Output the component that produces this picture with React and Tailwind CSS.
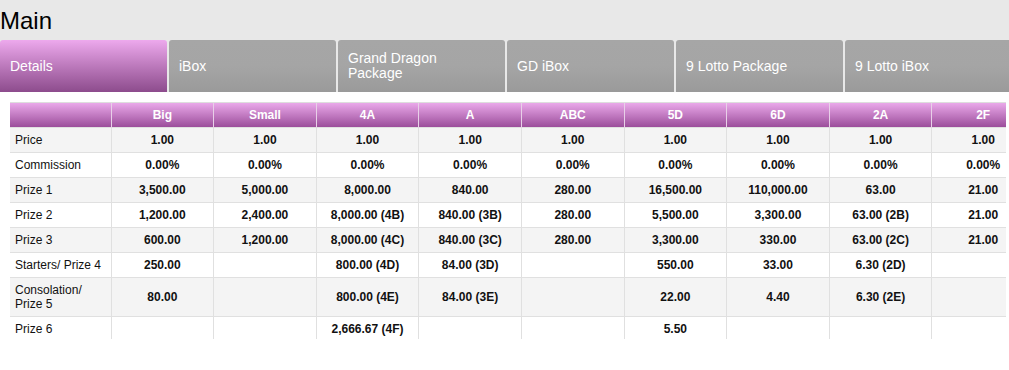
import React from "react";

const tabs = ["Details", "iBox", "Grand Dragon Package", "GD iBox", "9 Lotto Package", "9 Lotto iBox"];
const cols = ["Big", "Small", "4A", "A", "ABC", "5D", "6D", "2A", "2F"];
const rows = [
  ["Price", "1.00", "1.00", "1.00", "1.00", "1.00", "1.00", "1.00", "1.00", "1.00"],
  ["Commission", "0.00%", "0.00%", "0.00%", "0.00%", "0.00%", "0.00%", "0.00%", "0.00%", "0.00%"],
  ["Prize 1", "3,500.00", "5,000.00", "8,000.00", "840.00", "280.00", "16,500.00", "110,000.00", "63.00", "21.00"],
  ["Prize 2", "1,200.00", "2,400.00", "8,000.00 (4B)", "840.00 (3B)", "280.00", "5,500.00", "3,300.00", "63.00 (2B)", "21.00"],
  ["Prize 3", "600.00", "1,200.00", "8,000.00 (4C)", "840.00 (3C)", "280.00", "3,300.00", "330.00", "63.00 (2C)", "21.00"],
  ["Starters/ Prize 4", "250.00", "", "800.00 (4D)", "84.00 (3D)", "", "550.00", "33.00", "6.30 (2D)", ""],
  ["Consolation/ Prize 5", "80.00", "", "800.00 (4E)", "84.00 (3E)", "", "22.00", "4.40", "6.30 (2E)", ""],
  ["Prize 6", "", "", "2,666.67 (4F)", "", "", "5.50", "", "", ""],
];

export default function App() {
  return (
    <div className="w-[1009px] h-[370px] bg-white text-black overflow-hidden" style={{ fontFamily: '"Liberation Sans", Arial, sans-serif' }}>
      <div className="bg-[#e8e8e8]">
        <div className="h-[40px] pt-[7px] text-[24px] leading-[28px] text-black">Main</div>
        <div className="flex gap-[2px] h-[52px] w-[1012px]">
          {tabs.map((t, i) => (
            <div
              key={t}
              className={
                "w-[167px] shrink-0 flex items-center pl-[10px] pr-[30px] rounded-t-[3px] text-white text-[14px] leading-[15px] " +
                (i === 0
                  ? "bg-gradient-to-b from-[#eda9ed] to-[#8d4c8d]"
                  : "bg-gradient-to-b from-[#a6a6a6] via-[#a5a5a5] to-[#9a9a9a]")
              }
            >
              {t}
            </div>
          ))}
        </div>
      </div>
      <div className="ml-[10px] mt-[10px] w-[996px] h-[237px] overflow-hidden border-t border-[#dedede]">
        <table className="table-fixed w-[1025px] border-collapse text-[12px] leading-[14px]">
          <colgroup>
            <col className="w-[101px]" />
            {cols.map((c) => (
              <col key={c} />
            ))}
          </colgroup>
          <thead>
            <tr className="bg-gradient-to-b from-[#eaa9ea] to-[#984a98]">
              <th className="py-[5px] border-r border-[#e8d0e8]"></th>
              {cols.map((c) => (
                <th key={c} className="py-[5px] text-center font-bold text-white border-r border-[#e8d0e8]">
                  {c}
                </th>
              ))}
            </tr>
          </thead>
          <tbody>
            {rows.map((r, ri) => (
              <tr key={ri} className={ri % 2 === 0 ? "bg-[#f4f4f4]" : "bg-white"}>
                {r.map((v, ci) => (
                  <td
                    key={ci}
                    className={
                      "py-[5px] border border-[#e0e0e0] text-[#111] " +
                      (ci === 0 ? "pl-[5px] pr-[5px] text-left font-normal border-l-0" : "text-center font-bold")
                    }
                  >
                    {v}
                  </td>
                ))}
              </tr>
            ))}
          </tbody>
        </table>
      </div>
    </div>
  );
}
